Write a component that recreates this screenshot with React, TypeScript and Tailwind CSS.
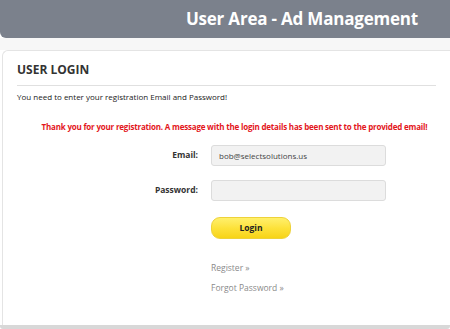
import React from "react";

export default function App() {
  const font = { fontFamily: '"Open Sans", "Liberation Sans", sans-serif' };
  return (
    <div className="w-[450px] h-[329px] bg-white overflow-hidden" style={font}>
      <div className="h-[38px] bg-[#7b818c] rounded-bl-[6px] flex items-center justify-end pr-[32px]">
        <span className="text-white font-bold text-[17px] tracking-[-0.2px]">User Area - Ad Management</span>
      </div>
      <div className="h-[12px] bg-[#f7f7f7]" />
      <div className="ml-[2px] h-[275px] border-t border-l border-[#e4e4e4] rounded-tl-[6px] bg-white flex flex-col">
        <div className="mx-[14px] mt-[10px] pb-[6px] border-b border-[#e0e0e0] text-[12px] font-bold text-[#333]">USER LOGIN</div>
        <div className="ml-[14px] mt-[5px] text-[8px] text-[#222]">You need to enter your registration Email and Password!</div>
        <div className="mt-[18px] text-center text-[8px] font-bold text-[#e3161c] pl-[16px] tracking-[-0.2px]">Thank you for your registration. A message with the login details has been sent to the provided email!</div>
        <div className="mt-[12px] flex items-center">
          <div className="w-[195px] text-right text-[8.5px] font-bold text-[#333]">Email:</div>
          <div className="ml-[13px] w-[175px] h-[21px] bg-[#f2f2f2] border border-[#dcdcdc] rounded-[3px] flex items-center px-[7px] text-[8px] text-[#444]">bob@selectsolutions.us</div>
        </div>
        <div className="mt-[14px] flex items-center">
          <div className="w-[195px] text-right text-[8.5px] font-bold text-[#333]">Password:</div>
          <div className="ml-[13px] w-[175px] h-[21px] bg-[#f2f2f2] border border-[#dcdcdc] rounded-[3px]" />
        </div>
        <div className="mt-[16px] ml-[208px] w-[80px] h-[22px] rounded-[9px] bg-gradient-to-b from-[#fff06a] via-[#fde23a] to-[#f7d414] border border-[#eed23a] flex items-center justify-center text-[8.5px] font-bold text-[#222]">Login</div>
        <div className="mt-[23px] ml-[208px] text-[8.5px] text-[#8a8a8a]">Register »</div>
        <div className="mt-[7px] ml-[208px] text-[8.5px] text-[#8a8a8a]">Forgot Password »</div>
      </div>
      <div className="h-[4px] bg-[#d8d8d8] rounded-b-[3px]" />
    </div>
  );
}
